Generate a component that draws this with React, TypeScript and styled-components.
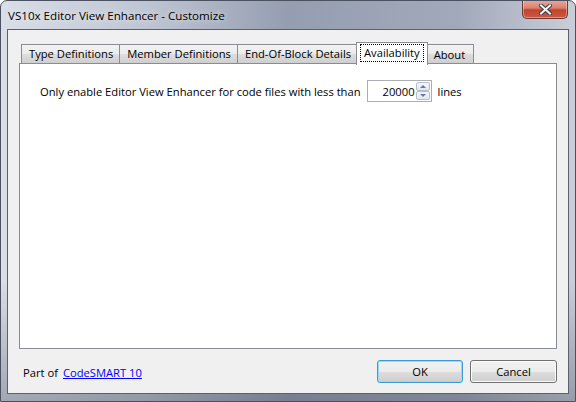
import React from "react"
import styled, { createGlobalStyle } from "styled-components"

const GlobalStyle = createGlobalStyle`
  html, body {
    margin: 0;
    padding: 0;
    background: #fff;
  }
  body {
    font-family: "Open Sans", "Noto Sans", sans-serif;
    font-size: 11.2px;
    color: #000;
  }
`

const ui_font = `"Open Sans", "Noto Sans", sans-serif`
const ui_size = "11.2px"

const Window = styled.div`
  width: 576px;
  height: 402px;
  box-sizing: border-box;
  border: 1px solid #4b5160;
  border-radius: 7px 7px 0 0;
  background: linear-gradient(
      180deg,
      rgba(255, 255, 255, 0) 0%,
      rgba(255, 255, 255, 0) 70%,
      rgba(60, 66, 84, 0.35) 100%
    ),
    linear-gradient(90deg, #d9dee7 0%, #bfc6d3 25%, #959db1 50%, #a2a9ba 80%, #c9ced8 100%);
  display: flex;
  flex-direction: column;
  overflow: hidden;
  font-family: ${ui_font};
`

const TitleBar = styled.div`
  height: 28px;
  display: flex;
  justify-content: space-between;
  align-items: flex-start;
  padding: 0 7px 0 7px;
`

const Title = styled.div`
  font-size: 11.6px;
  line-height: 16px;
  margin-top: 7px;
  color: #000;
  text-shadow: 0 0 6px rgba(255, 255, 255, 0.9);
`

const CloseButton = styled.div`
  width: 44px;
  height: 18px;
  margin-top: -1px;
  border: 1px solid #6e3a33;
  border-top: none;
  border-radius: 0 0 5px 5px;
  background: linear-gradient(180deg, #e7ab9d 0%, #d9806d 45%, #c4442c 55%, #c95a45 100%);
  box-shadow: inset 0 0 0 1px rgba(255, 255, 255, 0.35);
  display: flex;
  align-items: center;
  justify-content: center;
`

const Client = styled.div`
  flex: 1;
  margin: 0 6px 7px 6px;
  border: 1px solid #5a6070;
  background: #f0f0f0;
  display: flex;
  flex-direction: column;
  padding: 12px 11px 0 11px;
`

const TabStrip = styled.div`
  display: flex;
  align-items: flex-end;
  height: 22px;
  padding-left: 2px;
  position: relative;
  z-index: 1;
`

const Tab = styled.div<{ $active?: boolean }>`
  box-sizing: border-box;
  height: ${p => (p.$active ? "23px" : "20px")};
  margin: ${p => (p.$active ? "0 -2px -1px -2px" : "0 0 0 -1px")};
  padding: ${p => (p.$active ? "2px 4px 0 4px" : "1px 6px 0 7px")};
  border: 1px solid #898c95;
  border-bottom: ${p => (p.$active ? "none" : "1px solid #898c95")};
  background: ${p =>
    p.$active ? "#fff" : "linear-gradient(180deg, #f3f3f3 0%, #ebebeb 50%, #dddddd 51%, #cfcfcf 100%)"};
  font-size: ${ui_size};
  line-height: 16px;
  white-space: nowrap;
  position: relative;
  z-index: ${p => (p.$active ? 2 : 1)};
  &:first-child {
    margin-left: 0;
  }
  &:last-child {
    padding: 2px 8px 0 8px;
  }
`

const FocusText = styled.span`
  display: inline-block;
  outline: 1px dotted #000;
  outline-offset: 0;
  padding: 0 3px;
  line-height: 16px;
`

const Panel = styled.div`
  height: 286px;
  box-sizing: border-box;
  border: 1px solid #898c95;
  background: #fff;
  margin-top: -1px;
  padding: 16px 20px;
`

const Row = styled.div`
  display: flex;
  align-items: center;
  gap: 6px;
  font-size: ${ui_size};
`

const SpinBox = styled.div`
  width: 65px;
  height: 22px;
  box-sizing: border-box;
  border: 1px solid #abadb3;
  background: #fff;
  display: flex;
  align-items: center;
  padding: 1px 1px 1px 2px;
`

const SpinValue = styled.div`
  flex: 1;
  text-align: right;
  padding-right: 1px;
  font-size: ${ui_size};
`

const SpinButtons = styled.div`
  width: 14px;
  height: 18px;
  display: flex;
  flex-direction: column;
`

const SpinArrow = styled.div<{ $down?: boolean }>`
  flex: 1;
  box-sizing: border-box;
  border: 1px solid #b6bdc9;
  border-radius: 2px;
  background: linear-gradient(180deg, #f4f6f9 0%, #e3e7ee 100%);
  display: flex;
  align-items: center;
  justify-content: center;
  &::after {
    content: "";
    width: 0;
    height: 0;
    border-left: 3px solid transparent;
    border-right: 3px solid transparent;
    ${p => (p.$down ? "border-top: 3px solid #5a7bb0;" : "border-bottom: 3px solid #5a7bb0;")}
  }
`

const Footer = styled.div`
  flex: 1;
  display: flex;
  align-items: flex-start;
  justify-content: space-between;
  padding: 10px 0 0 4px;
`

const FooterText = styled.div`
  font-size: ${ui_size};
  margin-top: 6px;
  line-height: 16px;
`

const Link = styled.a`
  color: #0000ff;
  text-decoration: underline;
  margin-left: 5px;
`

const Buttons = styled.div`
  display: flex;
  gap: 7px;
  margin-top: 1px;
`

const Button = styled.button<{ $default?: boolean }>`
  width: ${p => (p.$default ? "86px" : "87px")};
  height: 23px;
  box-sizing: border-box;
  border: 1px solid ${p => (p.$default ? "#3c9ad6" : "#707070")};
  border-radius: 3px;
  background: linear-gradient(180deg, #f2f2f2 0%, #ebebeb 50%, #dddddd 51%, #cfcfcf 100%);
  box-shadow: ${p => (p.$default ? "inset 0 0 0 1px #9ad7f3" : "inset 0 0 0 1px #fbfbfb")};
  font-family: ${ui_font};
  font-size: ${ui_size};
  color: #000;
  padding: 0;
`

const CloseIcon = () => (
  <svg width="13" height="11" viewBox="0 0 13 11">
    <path
      d="M2 1.5 L6.5 5.5 L11 1.5 M2 9.5 L6.5 5.5 L11 9.5"
      stroke="#3a3f4c"
      strokeWidth="4"
      fill="none"
      strokeLinecap="square"
    />
    <path
      d="M2 1.5 L6.5 5.5 L11 1.5 M2 9.5 L6.5 5.5 L11 9.5"
      stroke="#f4f4f4"
      strokeWidth="2"
      fill="none"
      strokeLinecap="square"
    />
  </svg>
)

const App: React.FunctionComponent = () => {
  return (
    <>
      <GlobalStyle />
      <Window>
        <TitleBar>
          <Title>VS10x Editor View Enhancer - Customize</Title>
          <CloseButton>
            <CloseIcon />
          </CloseButton>
        </TitleBar>

        <Client>
          <TabStrip>
            <Tab>Type Definitions</Tab>
            <Tab>Member Definitions</Tab>
            <Tab>End-Of-Block Details</Tab>
            <Tab $active>
              <FocusText>Availability</FocusText>
            </Tab>
            <Tab>About</Tab>
          </TabStrip>

          <Panel>
            <Row>
              <span>Only enable Editor View Enhancer for code files with less than</span>
              <SpinBox>
                <SpinValue>20000</SpinValue>
                <SpinButtons>
                  <SpinArrow />
                  <SpinArrow $down />
                </SpinButtons>
              </SpinBox>
              <span>lines</span>
            </Row>
          </Panel>

          <Footer>
            <FooterText>
              Part of<Link href="#">CodeSMART 10</Link>
            </FooterText>
            <Buttons>
              <Button $default>OK</Button>
              <Button>Cancel</Button>
            </Buttons>
          </Footer>
        </Client>
      </Window>
    </>
  )
}

export default App
